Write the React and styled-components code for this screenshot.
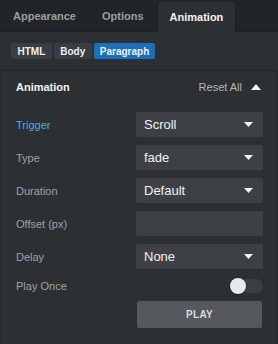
import React from "react";
import styled, { createGlobalStyle } from "styled-components";

const Global = createGlobalStyle`
  html, body { margin: 0; padding: 0; background: #2d3033; }
  body { font-family: "Liberation Sans", Arial, sans-serif; -webkit-font-smoothing: antialiased; }
`;

const Root = styled.div`
  width: 278px;
  height: 344px;
  background: #2d3033;
  display: flex;
  flex-direction: column;
  overflow: hidden;
`;

const TabBar = styled.div`
  display: flex;
  height: 32px;
  background: #222528;
  border-bottom: 1px solid #1c1e20;
  box-sizing: border-box;
`;

const Tab = styled.div`
  padding: 0 ${(p) => (p.$active ? 12 : 13)}px;
  display: flex;
  align-items: center;
  font-size: 11px;
  font-weight: bold;
  color: ${(p) => (p.$active ? "#f2f4f6" : "#9a9ea2")};
  background: ${(p) => (p.$active ? "#2d3033" : "transparent")};
  border-left: ${(p) => (p.$active ? "1px solid #1c1e20" : "none")};
  border-right: ${(p) => (p.$active ? "1px solid #1c1e20" : "none")};
  margin-top: ${(p) => (p.$active ? "2px" : "0")};
  margin-bottom: ${(p) => (p.$active ? "-1px" : "0")};
  padding-bottom: ${(p) => (p.$active ? "1px" : "0")};
`;

const Crumbs = styled.div`
  display: flex;
  gap: 2px;
  padding: 11px 11px 0;
  height: 16px;
`;

const Crumb = styled.div`
  height: 16px;
  padding: 0 ${(p) => (p.$active ? 6 : 6.5)}px;
  display: flex;
  align-items: center;
  border-radius: 2px;
  font-size: 10px;
  font-weight: bold;
  color: #eef0f2;
  background: ${(p) => (p.$active ? "#1b70b7" : "#3a3d41")};
`;

const Panel = styled.div`
  margin-top: 11px;
  flex: 1;
  border-top: 1px solid #232527;
  border-left: 1px solid #26292b;
  border-right: 1px solid #26292b;
  display: flex;
  flex-direction: column;
  padding: 0 14px 0 15px;
`;

const Header = styled.div`
  height: 32px;
  display: flex;
  align-items: center;
  justify-content: space-between;
  margin-bottom: 9px;
`;

const Title = styled.div`
  font-size: 11px;
  font-weight: bold;
  color: #f2f4f6;
`;

const Reset = styled.div`
  display: flex;
  align-items: center;
  gap: 9px;
  font-size: 11px;
  color: #b3b6b9;
  margin-right: 2px;
`;

const Rows = styled.div`
  display: flex;
  flex-direction: column;
  gap: 8px;
`;

const Row = styled.div`
  display: flex;
  align-items: center;
  justify-content: space-between;
  height: ${(p) => p.$h || 25}px;
`;

const Label = styled.div`
  font-size: 11px;
  color: ${(p) => (p.$accent ? "#4fa9e0" : "#9ea2a6")};
`;

const Select = styled.div`
  width: 127px;
  height: 25px;
  box-sizing: border-box;
  background: #3d4045;
  border-radius: 2px;
  display: flex;
  align-items: center;
  justify-content: space-between;
  padding: 0 10px 0 8px;
  font-size: 13px;
  color: #f0f2f4;
`;

const Toggle = styled.div`
  position: relative;
  width: 33px;
  height: 16px;
`;

const Track = styled.div`
  position: absolute;
  left: 6px;
  right: 0;
  top: 1px;
  height: 14px;
  border-radius: 7px;
  background: #3b3e42;
`;

const Knob = styled.div`
  position: absolute;
  left: 0;
  top: 0;
  width: 16px;
  height: 16px;
  border-radius: 50%;
  background: #e8e9ea;
  box-shadow: 0 1px 2px rgba(0, 0, 0, 0.4);
`;

const PlayRow = styled.div`
  display: flex;
  justify-content: flex-end;
  margin-top: 7px;
`;

const PlayButton = styled.div`
  width: 125px;
  height: 27px;
  margin-right: 1px;
  border-radius: 2px;
  background: #55585c;
  color: #dadcde;
  font-size: 10px;
  font-weight: bold;
  letter-spacing: 0.3px;
  display: flex;
  align-items: center;
  justify-content: center;
`;

const Caret = ({ up }) => (
  <svg width="9" height="5" viewBox="0 0 9 5" style={{ display: "block" }}>
    <path d={up ? "M0 5 L4.5 0 L9 5 Z" : "M0 0 L9 0 L4.5 5 Z"} fill="#f2f4f6" />
  </svg>
);

const BigCaret = () => (
  <svg width="10" height="6" viewBox="0 0 10 6" style={{ display: "block" }}>
    <path d="M0 6 L5 0 L10 6 Z" fill="#f2f4f6" />
  </svg>
);

const fields = [
  { label: "Trigger", value: "Scroll", accent: true },
  { label: "Type", value: "fade" },
  { label: "Duration", value: "Default" },
  { label: "Offset (px)", value: null },
  { label: "Delay", value: "None" },
];

export default function App() {
  return (
    <Root>
      <Global />
      <TabBar>
        <Tab>Appearance</Tab>
        <Tab>Options</Tab>
        <Tab $active>Animation</Tab>
      </TabBar>
      <Crumbs>
        <Crumb>HTML</Crumb>
        <Crumb>Body</Crumb>
        <Crumb $active>Paragraph</Crumb>
      </Crumbs>
      <Panel>
        <Header>
          <Title>Animation</Title>
          <Reset>
            Reset All
            <BigCaret />
          </Reset>
        </Header>
        <Rows>
          {fields.map((f) => (
            <Row key={f.label}>
              <Label $accent={f.accent}>{f.label}</Label>
              <Select>
                <span>{f.value}</span>
                {f.value !== null && <Caret />}
              </Select>
            </Row>
          ))}
          <Row $h={17}>
            <Label>Play Once</Label>
            <Toggle>
              <Track />
              <Knob />
            </Toggle>
          </Row>
        </Rows>
        <PlayRow>
          <PlayButton>PLAY</PlayButton>
        </PlayRow>
      </Panel>
    </Root>
  );
}
